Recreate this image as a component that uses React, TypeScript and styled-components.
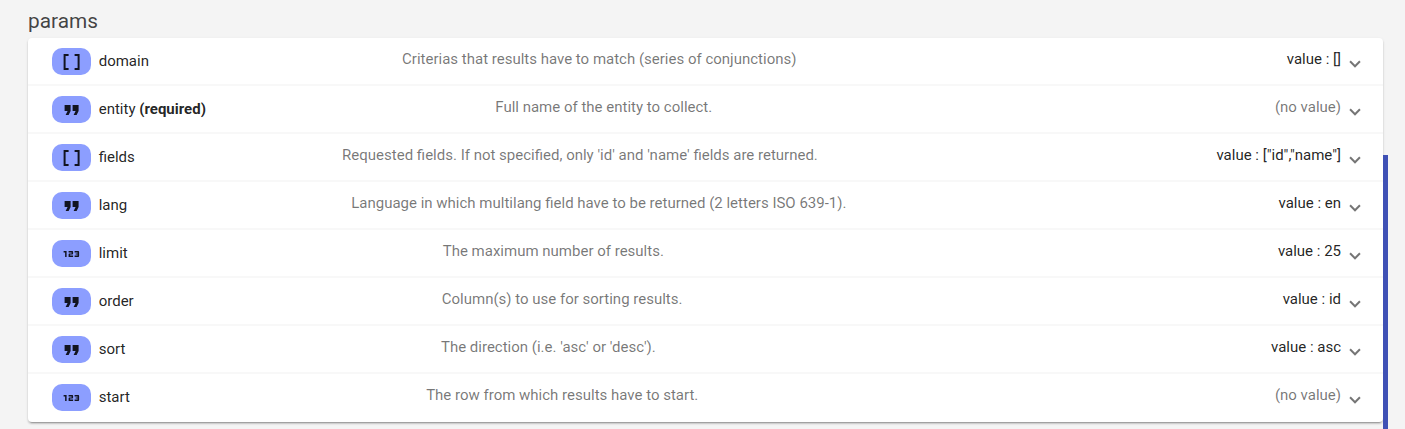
import React from "react";
import styled, { createGlobalStyle } from "styled-components";
import { Md123, MdDataArray, MdFormatQuote } from "react-icons/md";

const GlobalStyle = createGlobalStyle`
  body {
    margin: 0;
    background: #f4f4f4;
    overflow: hidden;
    font-family: Roboto, "Liberation Sans", sans-serif;
    font-size: 15px;
    color: rgba(0, 0, 0, 0.87);
  }
`;

const Page = styled.main`
  display: flex;
  height: 429px;
`;

const Section = styled.section`
  flex: 1;
  min-width: 0;
  padding-left: 28px;
`;

const Heading = styled.h2`
  margin: 0;
  height: 38px;
  padding-top: 9px;
  box-sizing: border-box;
  font-size: 20.8px;
  font-weight: 400;
  line-height: 24px;
  color: rgba(0, 0, 0, 0.74);
`;

const Panel = styled.div`
  height: 384px;
  background: #fff;
  border-radius: 4px;
  box-shadow:
    0 3px 1px -2px rgba(0, 0, 0, 0.2),
    0 2px 2px 0 rgba(0, 0, 0, 0.14),
    0 1px 3px 0 rgba(0, 0, 0, 0.1);
`;

const Row = styled.div`
  display: flex;
  align-items: center;
  box-sizing: border-box;
  height: 48px;
  padding: 0 24px;
  border-bottom: 2px solid #f8f8f8;

  &:last-child {
    border-bottom-color: transparent;
  }
`;

const Name = styled.div`
  display: flex;
  flex: 1 0 auto;
  align-items: center;
  margin-right: 16px;
`;

const Chip = styled.span`
  display: flex;
  align-items: center;
  justify-content: center;
  box-sizing: border-box;
  width: 39px;
  height: 27px;
  padding-top: 1px;
  margin-right: 7.7px;
  border-radius: 10px;
  background: #8c9eff;

  svg {
    width: 24px;
    height: 24px;
    transform: translateX(-0.4px);
  }
`;

const Description = styled.div`
  flex: 2 0 auto;
  margin-right: 16px;
  padding-bottom: 4px;
  color: rgba(0, 0, 0, 0.54);
`;

const Value = styled.div<{ $empty: boolean }>`
  padding-bottom: 4px;
  color: ${(p) => (p.$empty ? "rgba(0, 0, 0, 0.54)" : "inherit")};
`;

const Chevron = styled.span`
  width: 6px;
  height: 6px;
  margin: 1px 0 0 10px;
  border: solid rgba(0, 0, 0, 0.54);
  border-width: 0 2px 2px 0;
  transform: rotate(45deg);
`;

const Accent = styled.div`
  width: 5px;
  margin: 155px 17px 0 0;
  background: #3f51b5;
  z-index: 1;
`;

const icons = { array: MdDataArray, string: MdFormatQuote, number: Md123 };

type Param = {
  name: string;
  type: keyof typeof icons;
  description: string;
  value?: string;
  required?: boolean;
};

const params: Param[] = [
  { name: "domain", type: "array", description: "Criterias that results have to match (series of conjunctions)", value: "[]" },
  { name: "entity", type: "string", description: "Full name of the entity to collect.", required: true },
  { name: "fields", type: "array", description: "Requested fields. If not specified, only 'id' and 'name' fields are returned.", value: '["id","name"]' },
  { name: "lang", type: "string", description: "Language in which multilang field have to be returned (2 letters ISO 639-1).", value: "en" },
  { name: "limit", type: "number", description: "The maximum number of results.", value: "25" },
  { name: "order", type: "string", description: "Column(s) to use for sorting results.", value: "id" },
  { name: "sort", type: "string", description: "The direction (i.e. 'asc' or 'desc').", value: "asc" },
  { name: "start", type: "number", description: "The row from which results have to start." },
];

export default function App() {
  return (
    <Page>
      <GlobalStyle />
      <Section>
        <Heading>params</Heading>
        <Panel>
          {params.map((p) => {
            const Icon = icons[p.type];
            return (
              <Row key={p.name}>
                <Name>
                  <Chip>
                    <Icon />
                  </Chip>
                  <span>
                    {p.name}
                    {p.required && <b> (required)</b>}
                  </span>
                </Name>
                <Description>{p.description}</Description>
                <Value $empty={!p.value}>{p.value ? `value : ${p.value}` : "(no value)"}</Value>
                <Chevron />
              </Row>
            );
          })}
        </Panel>
      </Section>
      <Accent />
    </Page>
  );
}
